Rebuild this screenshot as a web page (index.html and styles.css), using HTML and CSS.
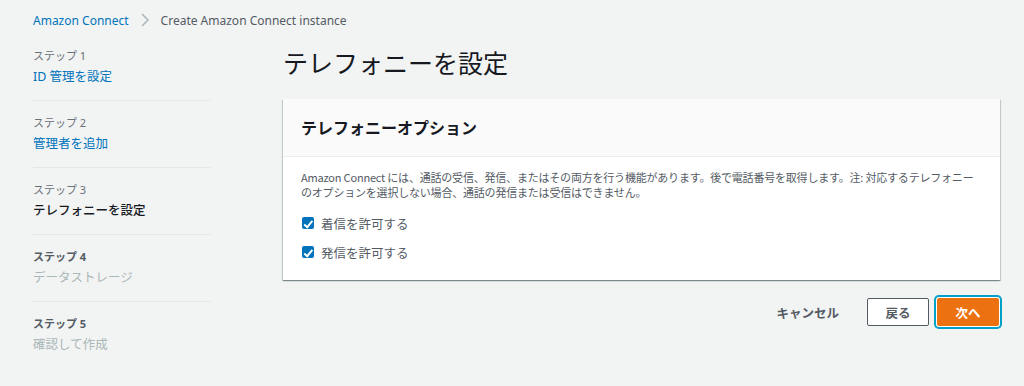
FILE: index.html
```html
<!doctype html>
<html lang="ja">
  <head>
    <meta charset="UTF-8" />
    <meta name="viewport" content="width=device-width" />
    <title>テレフォニーを設定 | Amazon Connect</title>
    <link rel="stylesheet" href="styles.css">
  </head>

  <body>
    <nav class="breadcrumb">
      <a href="#">Amazon Connect</a>
      <svg class="breadcrumb-chevron" width="10" height="14" viewBox="0 0 10 14">
        <path d="M2 1l6 6-6 6" fill="none" stroke="#aab7b8" stroke-width="1.5" />
      </svg>
      <span>Create Amazon Connect instance</span>
    </nav>

    <div class="wizard">
      <ol class="steps">
        <li class="step">
          <small class="step-label">ステップ 1</small>
          <a class="step-title" href="#">ID 管理を設定</a>
        </li>
        <li class="step">
          <small class="step-label">ステップ 2</small>
          <a class="step-title" href="#">管理者を追加</a>
        </li>
        <li class="step step--current">
          <small class="step-label">ステップ 3</small>
          <span class="step-title">テレフォニーを設定</span>
        </li>
        <li class="step step--disabled">
          <small class="step-label">ステップ 4</small>
          <span class="step-title">データストレージ</span>
        </li>
        <li class="step step--disabled">
          <small class="step-label">ステップ 5</small>
          <span class="step-title">確認して作成</span>
        </li>
      </ol>

      <main class="content">
        <h1>テレフォニーを設定</h1>

        <section class="card">
          <header class="card-header">
            <h2>テレフォニーオプション</h2>
          </header>
          <div class="card-body">
            <p class="description">
              Amazon Connect には、通話の受信、発信、またはその両方を行う機能があります。後で電話番号を取得します。注: 対応するテレフォニーのオプションを選択しない場合、通話の発信または受信はできません。
            </p>

            <label class="checkbox">
              <input type="checkbox" checked />
              <span class="checkbox-box"></span>
              着信を許可する
            </label>
            <label class="checkbox">
              <input type="checkbox" checked />
              <span class="checkbox-box"></span>
              発信を許可する
            </label>
          </div>
        </section>

        <div class="actions">
          <button class="button button--link">キャンセル</button>
          <button class="button">戻る</button>
          <button class="button button--primary">次へ</button>
        </div>
      </main>
    </div>
  </body>
</html>
```

FILE: styles.css
```css
* {
  box-sizing: border-box;
}

:root {
  --background-color: #f2f3f3;
  --text-color: #16191f;
  --secondary-color: #545b64;
  --muted-color: #687078;
  --disabled-color: #aab7b8;
  --link-color: #0073bb;
  --divider-color: #e4e7e7;
  --orange: #ec7211;
}

body {
  margin: 0;
  background-color: var(--background-color);
  color: var(--text-color);
  font-family: "Noto Sans", "Noto Sans CJK JP", sans-serif;
  font-size: 12.5px;
}

a {
  color: var(--link-color);
  text-decoration: none;
}

.breadcrumb {
  display: flex;
  align-items: center;
  gap: 9px;
  height: 34px;
  padding: 6px 0 0 33px;
  font-size: 12px;
  color: var(--secondary-color);
}

.breadcrumb-chevron {
  margin: 0 2px;
}

.wizard {
  display: grid;
  grid-template-columns: 178px 717px;
  gap: 72px;
  padding-left: 33px;
}

.steps {
  margin: 0;
  padding: 0;
  list-style: none;
}

.step {
  display: flex;
  flex-direction: column;
  gap: 5px;
  padding: 15px 0 14px;
  border-bottom: 1px solid var(--divider-color);
}

.step:last-child {
  border-bottom: 0;
}

.step-label {
  font-size: 11px;
  line-height: 14px;
  color: var(--muted-color);
}

.step-title {
  line-height: 18px;
}

.step--current .step-title {
  font-weight: 500;
  color: var(--text-color);
}

.step--disabled .step-label {
  font-weight: bold;
  color: var(--secondary-color);
}

.step--disabled .step-title {
  color: var(--disabled-color);
}

h1 {
  margin: 12px 0 21px;
  font-family: "Noto Sans CJK JP", sans-serif;
  font-size: 25px;
  font-weight: 400;
  line-height: 32px;
}

.card {
  background: #fff;
  box-shadow:
    0 1px 1px 0 rgba(0, 28, 36, 0.3),
    1px 1px 1px 0 rgba(0, 28, 36, 0.15),
    -1px 1px 1px 0 rgba(0, 28, 36, 0.15);
}

.card-header {
  padding: 18px 18px 19px;
  background: #fafafa;
  border-bottom: 1px solid #eaeded;
}

h2 {
  margin: 0;
  font-family: "Noto Sans CJK JP", sans-serif;
  font-size: 16px;
  font-weight: bold;
  line-height: 20px;
}

.card-body {
  display: flex;
  flex-direction: column;
  align-items: flex-start;
  gap: 9px;
  padding: 13px 22px 18px 18px;
}

.description {
  margin: 0 0 4px;
  font-family: "Noto Sans CJK JP", sans-serif;
  font-size: 11px;
  letter-spacing: -0.2px;
  line-height: 15px;
  color: var(--secondary-color);
}

.checkbox {
  display: flex;
  align-items: center;
  gap: 7px;
  height: 20px;
  color: var(--secondary-color);
  cursor: pointer;
}

.checkbox input {
  display: none;
}

.checkbox-box {
  position: relative;
  width: 12px;
  height: 12px;
  margin-left: 1px;
  border-radius: 2px;
  background: var(--link-color);
}

.checkbox-box::after {
  content: "";
  position: absolute;
  left: 4px;
  top: 1.5px;
  width: 3px;
  height: 6.5px;
  border: solid #fff;
  border-width: 0 2px 2px 0;
  transform: rotate(40deg);
}

.actions {
  display: flex;
  justify-content: flex-end;
  gap: 8px;
  margin-top: 18px;
  padding-right: 1px;
}

.button {
  min-width: 62px;
  height: 28px;
  padding: 0 13px;
  border: 1px solid var(--secondary-color);
  border-radius: 2px;
  background: #fff;
  color: var(--secondary-color);
  font-family: "Noto Sans CJK JP", sans-serif;
  font-size: 12.5px;
  font-weight: bold;
  cursor: pointer;
}

.button--link {
  margin-right: 19px;
  padding: 0;
  border-color: transparent;
  background: none;
}

.button--primary {
  border-color: var(--orange);
  background: var(--orange);
  color: #fff;
  box-shadow: 0 0 0 1px #fff, 0 0 0 3px #00a1c9;
}
```
